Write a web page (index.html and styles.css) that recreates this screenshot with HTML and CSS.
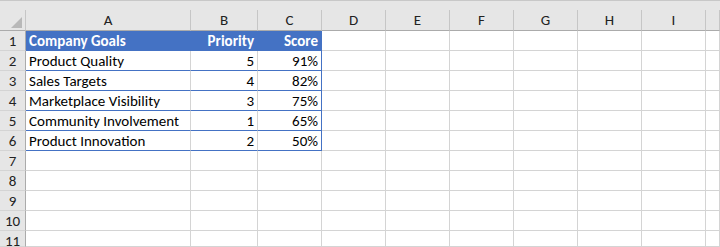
FILE: index.html
```html
<!DOCTYPE html>
<html lang="en">
<head>
    <meta charset="UTF-8">
    <title>Company Goals - Sheet1</title>
    <link rel="stylesheet" href="styles.css">
</head>
<body>
    <div class="sheet">
        <!-- strip under the formula bar -->
        <div class="topstrip"></div>

        <!-- Column headers -->
        <div class="row head">
            <div class="corner"><span class="tri"></span></div>
            <div class="colhdr">A</div>
            <div class="colhdr">B</div>
            <div class="colhdr">C</div>
            <div class="colhdr">D</div>
            <div class="colhdr">E</div>
            <div class="colhdr">F</div>
            <div class="colhdr">G</div>
            <div class="colhdr">H</div>
            <div class="colhdr">I</div>
            <div class="colhdr"></div>
        </div>

        <!-- Table rows -->
        <div class="row">
            <div class="rownum">1</div>
            <div class="cell tbl th">Company Goals</div>
            <div class="cell tbl th right">Priority</div>
            <div class="cell tbl th right last">Score</div>
            <div class="cell"></div><div class="cell"></div><div class="cell"></div><div class="cell"></div><div class="cell"></div><div class="cell"></div><div class="cell"></div>
        </div>
        <div class="row">
            <div class="rownum">2</div>
            <div class="cell tbl">Product Quality</div>
            <div class="cell tbl right">5</div>
            <div class="cell tbl right last">91%</div>
            <div class="cell"></div><div class="cell"></div><div class="cell"></div><div class="cell"></div><div class="cell"></div><div class="cell"></div><div class="cell"></div>
        </div>
        <div class="row">
            <div class="rownum">3</div>
            <div class="cell tbl">Sales Targets</div>
            <div class="cell tbl right">4</div>
            <div class="cell tbl right last">82%</div>
            <div class="cell"></div><div class="cell"></div><div class="cell"></div><div class="cell"></div><div class="cell"></div><div class="cell"></div><div class="cell"></div>
        </div>
        <div class="row">
            <div class="rownum">4</div>
            <div class="cell tbl">Marketplace Visibility</div>
            <div class="cell tbl right">3</div>
            <div class="cell tbl right last">75%</div>
            <div class="cell"></div><div class="cell"></div><div class="cell"></div><div class="cell"></div><div class="cell"></div><div class="cell"></div><div class="cell"></div>
        </div>
        <div class="row">
            <div class="rownum">5</div>
            <div class="cell tbl">Community Involvement</div>
            <div class="cell tbl right">1</div>
            <div class="cell tbl right last">65%</div>
            <div class="cell"></div><div class="cell"></div><div class="cell"></div><div class="cell"></div><div class="cell"></div><div class="cell"></div><div class="cell"></div>
        </div>
        <div class="row">
            <div class="rownum">6</div>
            <div class="cell tbl">Product Innovation</div>
            <div class="cell tbl right">2</div>
            <div class="cell tbl right last">50%</div>
            <div class="cell"></div><div class="cell"></div><div class="cell"></div><div class="cell"></div><div class="cell"></div><div class="cell"></div><div class="cell"></div>
        </div>

        <!-- Empty rows -->
        <div class="row">
            <div class="rownum">7</div>
            <div class="cell"></div><div class="cell"></div><div class="cell"></div><div class="cell"></div><div class="cell"></div><div class="cell"></div><div class="cell"></div><div class="cell"></div><div class="cell"></div><div class="cell"></div>
        </div>
        <div class="row">
            <div class="rownum">8</div>
            <div class="cell"></div><div class="cell"></div><div class="cell"></div><div class="cell"></div><div class="cell"></div><div class="cell"></div><div class="cell"></div><div class="cell"></div><div class="cell"></div><div class="cell"></div>
        </div>
        <div class="row">
            <div class="rownum">9</div>
            <div class="cell"></div><div class="cell"></div><div class="cell"></div><div class="cell"></div><div class="cell"></div><div class="cell"></div><div class="cell"></div><div class="cell"></div><div class="cell"></div><div class="cell"></div>
        </div>
        <div class="row">
            <div class="rownum">10</div>
            <div class="cell"></div><div class="cell"></div><div class="cell"></div><div class="cell"></div><div class="cell"></div><div class="cell"></div><div class="cell"></div><div class="cell"></div><div class="cell"></div><div class="cell"></div>
        </div>
        <div class="row last-row">
            <div class="rownum">11</div>
            <div class="cell"></div><div class="cell"></div><div class="cell"></div><div class="cell"></div><div class="cell"></div><div class="cell"></div><div class="cell"></div><div class="cell"></div><div class="cell"></div><div class="cell"></div>
        </div>
    </div>
</body>
</html>
```

FILE: styles.css
```css
/* Excel-like sheet */
body {
    margin: 0;
    padding: 0;
    background-color: #FFFFFF;
    overflow: hidden;
    font-family: Carlito, Calibri, Lato, "Liberation Sans", sans-serif;
    font-size: 15px;
    color: #000000;
}
.sheet {
    width: 720px;
    height: 247px;
    overflow: hidden;
}
.topstrip {
    height: 10px;
    box-sizing: border-box;
    background-color: #E6E6E6;
    border-top: 1px solid #C8C8C8;
}
.row {
    display: grid;
    grid-template-columns: 26px 165px 67px 64px repeat(6, 64px) 1fr;
    height: 20px;
}
.row.head {
    height: 21px;
}
.row.last-row {
    height: 16px;
}
.row > div {
    box-sizing: border-box;
    border-right: 1px solid #D4D4D4;
    border-bottom: 1px solid #D4D4D4;
    white-space: nowrap;
    overflow: hidden;
    line-height: 18px;
    padding-top: 1px;
}
.corner, .colhdr, .rownum {
    background-color: #E6E6E6;
    color: #222222;
}
.row.head > div {
    border-right-color: #C6C6C6;
    border-bottom-color: #ABABAB;
    line-height: 20px;
    padding-top: 0;
}
.colhdr {
    text-align: center;
}
.corner {
    display: flex;
    justify-content: flex-end;
    align-items: flex-end;
    padding: 0 3px 2px 0;
}
.corner .tri {
    width: 0;
    height: 0;
    border-left: 11px solid transparent;
    border-bottom: 11px solid #B8B8B8;
}
.rownum {
    text-align: center;
    border-right-color: #ABABAB !important;
}
.cell {
    padding-left: 3px;
    padding-right: 3px;
}
.right {
    text-align: right;
}
.cell.tbl {
    border-bottom-color: #4472C4;
}
.cell.tbl.last {
    border-right-color: #4472C4;
}
.cell.th {
    background-color: #4472C4;
    border-right-color: #4472C4;
    color: #FFFFFF;
    font-weight: bold;
}
```
